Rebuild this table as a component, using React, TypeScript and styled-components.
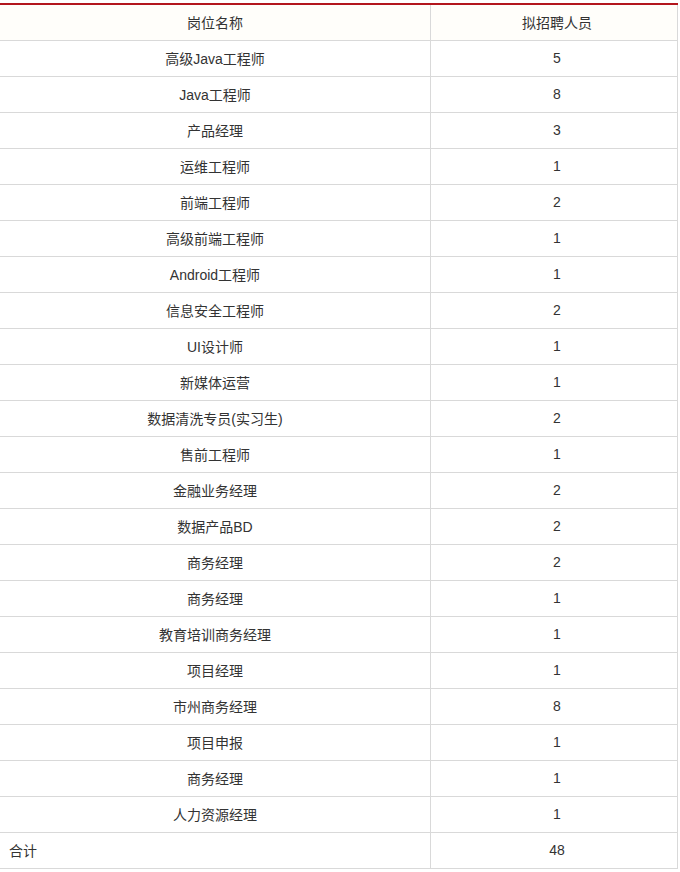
import styled, { createGlobalStyle } from "styled-components";

const rows: [string, number][] = [
    ["高级Java工程师", 5],
    ["Java工程师", 8],
    ["产品经理", 3],
    ["运维工程师", 1],
    ["前端工程师", 2],
    ["高级前端工程师", 1],
    ["Android工程师", 1],
    ["信息安全工程师", 2],
    ["UI设计师", 1],
    ["新媒体运营", 1],
    ["数据清洗专员(实习生)", 2],
    ["售前工程师", 1],
    ["金融业务经理", 2],
    ["数据产品BD", 2],
    ["商务经理", 2],
    ["商务经理", 1],
    ["教育培训商务经理", 1],
    ["项目经理", 1],
    ["市州商务经理", 8],
    ["项目申报", 1],
    ["商务经理", 1],
    ["人力资源经理", 1],
];

const App = () => {
    return (
        <>
            <GlobalStyle />
            <Page>
                <Table>
                    <thead>
                        <tr>
                            <HeadCell>岗位名称</HeadCell>
                            <HeadCell>拟招聘人员</HeadCell>
                        </tr>
                    </thead>
                    <tbody>
                        {rows.map(([name, count], i) => (
                            <tr key={i}>
                                <Cell>{name}</Cell>
                                <Cell>{count}</Cell>
                            </tr>
                        ))}
                        <tr>
                            <Cell $left>合计</Cell>
                            <Cell>48</Cell>
                        </tr>
                    </tbody>
                </Table>
            </Page>
        </>
    );
};
export default App;

const GlobalStyle = createGlobalStyle`
    body {
        margin: 0;
        background: #ffffff;
        font-family: "Liberation Sans", "Noto Sans CJK SC", sans-serif;
    }
`;

const Page = styled.div`
    padding-top: 3px;
    overflow: hidden;
    width: 680px;
`;

const Table = styled.table`
    border-collapse: collapse;
    width: 679px;
    margin-left: -1px;
    table-layout: fixed;
    border-top: 2px solid #b3161d;
    color: #333333;
    font-size: 14px;
`;

const HeadCell = styled.th`
    font-weight: normal;
    height: 33px;
    padding: 0 0 2px;
    text-align: center;
    border-left: 1px solid #d9d9d9;
    border-right: 1px solid #d9d9d9;
    border-bottom: 1px solid #d9d9d9;
    background: #fffefa;
    &:first-child {
        width: 430px;
    }
    &:last-child {
        padding-left: 6px;
    }
`;

const Cell = styled.td<{ $left?: boolean }>`
    height: 33px;
    padding: 0 ${(p) => (p.$left ? "9px" : "0")} 2px;
    text-align: ${(p) => (p.$left ? "left" : "center")};
    border: 1px solid #d9d9d9;
    border-top: none;
    &:last-child {
        padding-left: 6px;
    }
`;
